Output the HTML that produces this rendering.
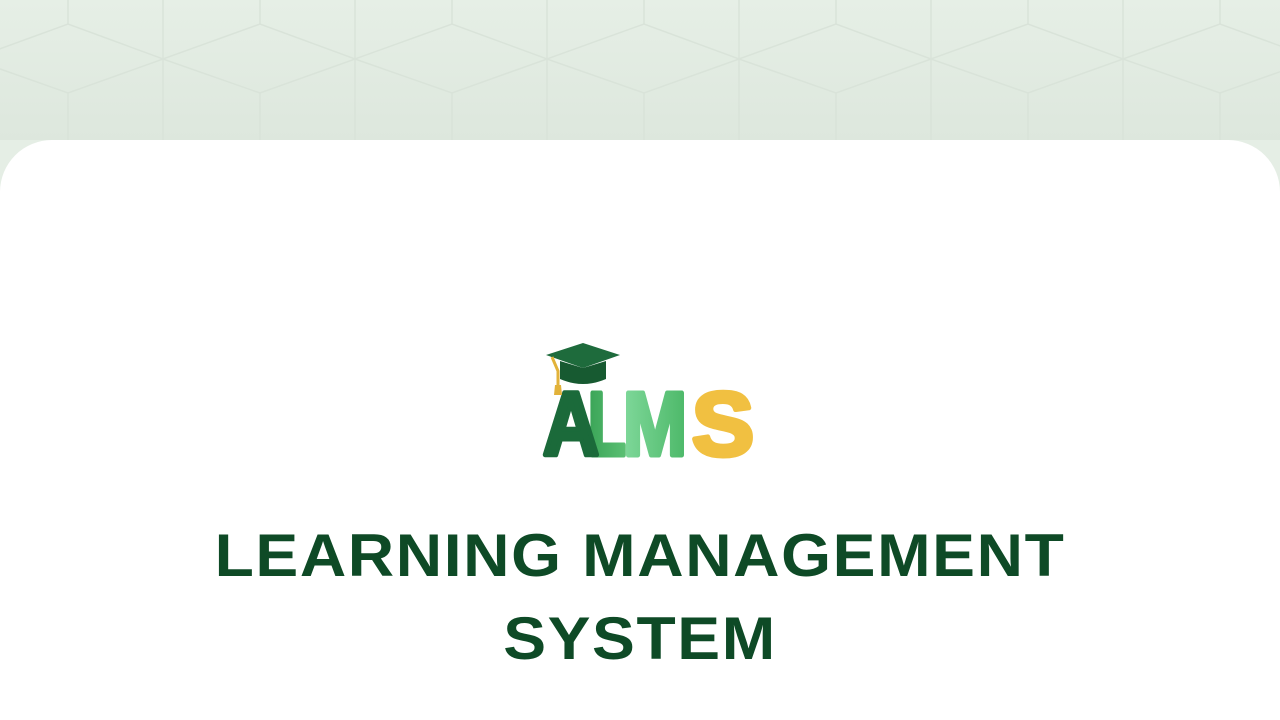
<!DOCTYPE html>
<html><head><style>
html,body{margin:0;width:1280px;height:720px;overflow:hidden}
body{background:#e5eee5;font-family:"Liberation Sans",sans-serif;position:relative}
.card{position:absolute;left:0;top:140px;width:1280px;height:580px;background:#fff;border-radius:52px 52px 0 0}
h1{position:absolute;left:0;width:1280px;top:514px;margin:0;text-align:center;color:#0e4a26;font-size:60px;line-height:83px;font-weight:bold;letter-spacing:1.5px;transform:scaleX(1.07);transform-origin:640px 0}
</style></head><body>
<svg width="1280" height="140" style="position:absolute;left:0;top:0">
<defs><linearGradient id="g" x1="0" y1="0" x2="0" y2="1"><stop offset="0" stop-color="#e6efe6"/><stop offset="1" stop-color="#dde7dd"/></linearGradient></defs>
<rect width="1280" height="140" fill="url(#g)"/>
<g stroke="#d9e3d9" stroke-width="1.5" fill="none">
<path d="M68 0V24M68 93V140M163 0V140M260 0V24M260 93V140M355 0V140M452 0V24M452 93V140M547 0V140M644 0V24M644 93V140M739 0V140M836 0V24M836 93V140M931 0V140M1028 0V24M1028 93V140M1123 0V140M1220 0V24M1220 93V140"/>
<path d="M-28 59L68 24L163 59L260 24L355 59L452 24L547 59L644 24L739 59L836 24L931 59L1028 24L1123 59L1220 24L1316 59"/>
<path d="M-28 59L68 93L163 59L260 93L355 59L452 93L547 59L644 93L739 59L836 93L931 59L1028 93L1123 59L1220 93L1316 59"/>
</g></svg>
<div class="card"></div>
<svg width="240" height="135" style="position:absolute;left:530px;top:335px" viewBox="0 0 240 135">
<defs>
<linearGradient id="lg" x1="0" x2="1"><stop offset="0" stop-color="#3aa457"/><stop offset="1" stop-color="#5cc074"/></linearGradient>
<linearGradient id="mg" x1="0" x2="1"><stop offset="0" stop-color="#7fd89a"/><stop offset="1" stop-color="#4cb868"/></linearGradient>
</defs>
<g font-family="Liberation Sans" font-weight="bold" font-size="90" stroke-linejoin="round" stroke-width="5">
<text x="58" y="120" fill="url(#lg)" stroke="url(#lg)" textLength="38" lengthAdjust="spacingAndGlyphs">L</text>
<text x="93" y="120" fill="url(#mg)" stroke="url(#mg)" textLength="64" lengthAdjust="spacingAndGlyphs">M</text>
<text x="162" y="120" fill="#f1c041" stroke="#f1c041" textLength="62" lengthAdjust="spacingAndGlyphs">S</text>
<text x="13" y="120" fill="#1b6a3a" stroke="#1b6a3a" textLength="56" lengthAdjust="spacingAndGlyphs">A</text>
</g>
<path d="M16 20L53 8L90 20L53 33Z" fill="#1e6b3c"/>
<path d="M30 26V44Q53 54 76 44V26L53 33Z" fill="#175a31"/>
<path d="M22 22L28 36V52" stroke="#e2b23a" stroke-width="3" fill="none"/>
<path d="M25 50L31 50L32 60L24 60Z" fill="#e2b23a"/>
</svg>
<h1>LEARNING MANAGEMENT<br>SYSTEM</h1>
</body></html>
